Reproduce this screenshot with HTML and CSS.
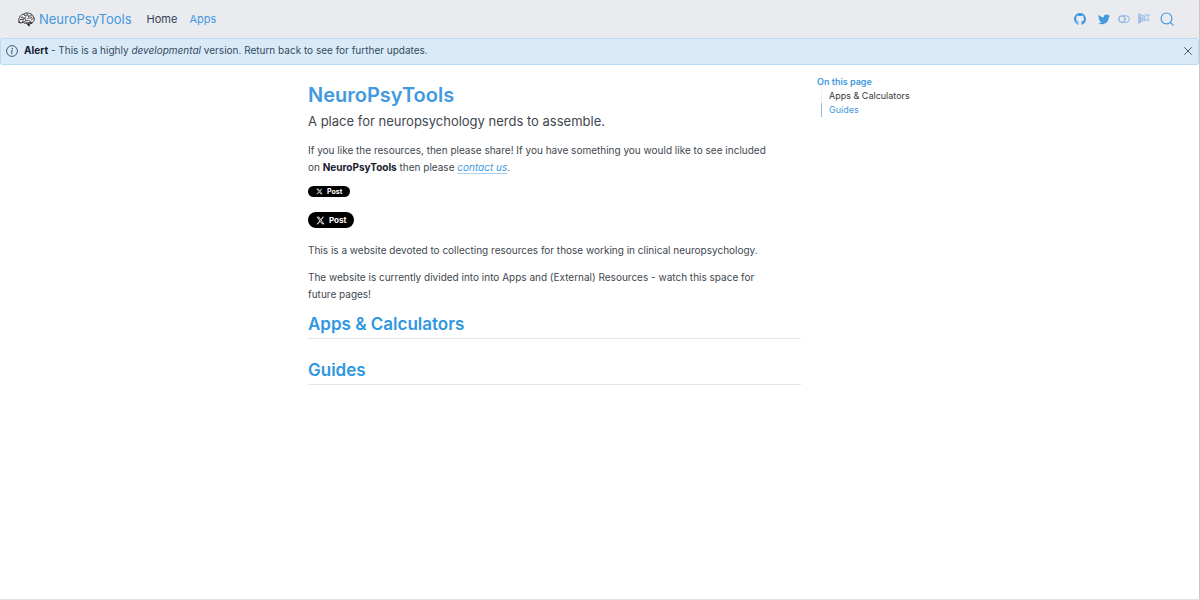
FILE: index.html
```html
<!DOCTYPE html>
<html lang="en">
<head>
<meta charset="utf-8">
<meta name="viewport" content="width=device-width, initial-scale=1">
<title>NeuroPsyTools</title>
<link rel="stylesheet" href="styles.css">
</head>
<body>
<header class="navbar">
  <a class="brand" href="#">
    <svg class="brand-logo" viewBox="0 0 32 28" fill="none" stroke="#25282c" stroke-width="1.7" stroke-linecap="round" stroke-linejoin="round" aria-hidden="true">
      <path fill="#f4f4f4" d="M4 19C0 17 1 12 3 10 4 6 8 4 11 4c3-3 8-3 11-1 4 0 6 3 7 6 3 3 2 8-1 9-1 3-3 4-6 4l-2 4-4-5c-3 1-5 0-6-2-3 2-7 2-9 0z"/>
      <path d="M6 10c3-2 5 0 4 2M4 14c3-1 5 1 8-1M11 4c-1 3 3 3 5 2M15 9c-3 0-3 4-1 5M17 3c2 2 0 4 3 5M20 8c3 0 4-2 6-1M18 12c2-2 5 0 8-1M29 12c-2 0-2 3-4 3M13 19c-1-4 3-4 5-3M20 16c1 2 4 1 5 3M16 20c2 1 4-1 5 1M8 17c1 0 3-1 4 1"/>
      <path stroke-width="2.4" d="M19 21l2 5M22 20l4 1"/>
    </svg>
    <span>NeuroPsyTools</span>
  </a>
  <nav class="nav-links" aria-label="Main">
    <a class="nav-link nav-link-current" href="#">Home</a>
    <a class="nav-link" href="#">Apps</a>
  </nav>
  <div class="nav-tools">
    <a class="tool tool-github" href="#" aria-label="GitHub">
      <svg class="icon" viewBox="0 0 16 16" fill="currentColor"><path d="M8 0C3.58 0 0 3.58 0 8c0 3.54 2.29 6.53 5.47 7.59.4.07.55-.17.55-.38 0-.19-.01-.82-.01-1.49-2.01.37-2.53-.49-2.69-.94-.09-.23-.48-.94-.82-1.13-.28-.15-.68-.52-.01-.53.63-.01 1.08.58 1.23.82.72 1.21 1.87.87 2.33.66.07-.52.28-.87.51-1.07-1.78-.2-3.64-.89-3.64-3.95 0-.87.31-1.59.82-2.15-.08-.2-.36-1.02.08-2.12 0 0 .67-.21 2.2.82.64-.18 1.32-.27 2-.27s1.36.09 2 .27c1.53-1.04 2.2-.82 2.2-.82.44 1.1.16 1.92.08 2.12.51.56.82 1.27.82 2.15 0 3.07-1.87 3.75-3.65 3.95.29.25.54.73.54 1.48 0 1.07-.01 1.93-.01 2.2 0 .21.15.46.55.38A8.01 8.01 0 0 0 16 8c0-4.42-3.58-8-8-8z"/></svg>
    </a>
    <a class="tool" href="#" aria-label="Twitter">
      <svg class="icon" viewBox="0 0 16 16" fill="currentColor"><path d="M5.03 15c6.04 0 9.34-5 9.34-9.33 0-.14 0-.28-.01-.42A6.7 6.7 0 0 0 16 3.54a6.5 6.5 0 0 1-1.89.52 3.3 3.3 0 0 0 1.45-1.82 6.5 6.5 0 0 1-2.09.79A3.29 3.29 0 0 0 7.88 6.03 9.3 9.3 0 0 1 1.11 2.6a3.29 3.29 0 0 0 1.02 4.38A3.3 3.3 0 0 1 .64 6.58v.04a3.29 3.29 0 0 0 2.63 3.22 3.2 3.2 0 0 1-.86.11 3 3 0 0 1-.62-.06 3.29 3.29 0 0 0 3.07 2.28A6.6 6.6 0 0 1 .78 13.6a6 6 0 0 1-.78-.05A9.3 9.3 0 0 0 5.03 15"/></svg>
    </a>
    <button class="tool tool-soft" type="button" aria-label="Toggle dark mode">
      <svg class="icon" viewBox="0 0 12 12" fill="none" stroke="currentColor" stroke-width="1"><rect x=".6" y="2.8" width="10.8" height="6.6" rx="3.3"/><circle cx="4" cy="6.100" r="3.200"/><path d="M5.600 3.400c1.800 1.300 1.800 4.100 0 5.400"/></svg>
    </button>
    <button class="tool tool-soft tool-reader" type="button" aria-label="Toggle reader mode">
      <svg class="icon" viewBox="0 0 12 12" fill="none" stroke="currentColor" stroke-width=".9"><path fill="currentColor" fill-opacity=".3" d="M1 1l6 2.500v3L1 10z"/><path d="M1 .5v11M6.500 2h5L9.500 4.500l1.800 2.700H6.500M2.500 3.500v5M4.500 4v3.500"/></svg>
    </button>
    <button class="tool" type="button" aria-label="Search">
      <svg class="icon-search" viewBox="0 0 16 16" fill="none" stroke="currentColor" stroke-width="1.3" stroke-linecap="round"><circle cx="7.400" cy="7.400" r="6.200"/><path d="M12 12l3 3"/></svg>
    </button>
  </div>
</header>

<div class="alert" role="alert">
  <svg class="alert-icon" viewBox="0 0 12 12" fill="none" stroke="currentColor" aria-hidden="true"><circle cx="6" cy="6" r="5.400" stroke-width=".9"/><path d="M5.200 5.100h1L5.500 8.400c0 .5.400.5.900.2" stroke-width=".9"/><circle cx="6.400" cy="3.400" r=".6" fill="currentColor" stroke="none"/></svg>
  <p class="alert-text"><strong>Alert</strong> - This is a highly <em>developmental</em> version. Return back to see for further updates.</p>
  <button class="alert-close" type="button" aria-label="Close alert">
    <svg class="close-icon" viewBox="0 0 8 8" fill="none" stroke="currentColor" stroke-width=".9" stroke-linecap="round"><path d="M.6.6l6.800 6.800M7.400.6L.6 7.400"/></svg>
  </button>
</div>

<div class="page">
  <main class="content">
    <h1 class="title">NeuroPsyTools</h1>
    <p class="subtitle">A place for neuropsychology nerds to assemble.</p>
    <p class="text">If you like the resources, then please share! If you have something you would like to see included on <strong>NeuroPsyTools</strong> then please <a class="link" href="#">contact us</a>.</p>
    <div class="share">
      <a class="post post-small" href="#">
        <svg class="x-logo" viewBox="0 0 24 24" fill="currentColor" aria-hidden="true"><path d="M18.240 2.250h3.310l-7.230 8.260 8.500 11.240h-6.660l-5.210-6.820-5.970 6.820H1.680l7.730-8.840L1.250 2.250h6.830l4.710 6.230zm-1.160 17.520h1.830L7.080 4.130H5.120z"/></svg>
        <span>Post</span>
      </a>
      <a class="post" href="#">
        <svg class="x-logo" viewBox="0 0 24 24" fill="currentColor" aria-hidden="true"><path d="M18.240 2.250h3.310l-7.230 8.260 8.500 11.240h-6.660l-5.210-6.820-5.970 6.820H1.680l7.730-8.840L1.250 2.250h6.830l4.710 6.230zm-1.160 17.520h1.830L7.080 4.130H5.120z"/></svg>
        <span>Post</span>
      </a>
    </div>
    <p class="text">This is a website devoted to collecting resources for those working in clinical neuropsychology.</p>
    <p class="text">The website is currently divided into into Apps and (External) Resources - watch this space for future pages!</p>
    <section class="section" id="apps"><h2 class="section-title">Apps &amp; Calculators</h2></section>
    <section class="section" id="guides"><h2 class="section-title">Guides</h2></section>
  </main>
  <nav class="toc" aria-labelledby="toc-title">
    <h2 class="toc-title" id="toc-title">On this page</h2>
    <ul class="toc-list">
      <li><a class="toc-link" href="#apps">Apps &amp; Calculators</a></li>
      <li><a class="toc-link toc-link-active" href="#guides">Guides</a></li>
    </ul>
  </nav>
</div>
</body>
</html>
```

FILE: styles.css
```css
* { box-sizing: border-box; }

body {
  margin: 0;
  min-height: 100vh;
  border-right: 1px solid #c9c9c9;
  border-bottom: 1px solid #e2e2e2;
  background: #fff;
  color: #40474f;
  font-family: Inter, sans-serif;
  font-size: 10px;
  line-height: 17px;
}

h1, h2, p, ul { margin: 0; padding: 0; }
a { color: #4199de; text-decoration: none; }
strong { color: #17202b; font-weight: 700; }
button { border: 0; padding: 0; background: none; font: inherit; cursor: pointer; }
svg { display: block; }

.navbar {
  display: flex;
  align-items: center;
  min-height: 38px;
  padding: 0 25px 0 18px;
  background: #eaebef;
}
.brand { display: flex; align-items: center; gap: 4px; font-size: 13px; }
.brand-logo { width: 17px; height: 15px; }
.nav-links { display: flex; gap: 12px; margin-left: 15px; font-size: 11px; }
.nav-link-current { color: #2e4057; }
.nav-tools { display: flex; align-items: center; gap: 8px; margin-left: auto; }
.tool { display: block; color: #4199de; }
.tool-github { margin-right: 4px; }
.tool-soft { color: #8ab7e5; }
.tool-reader { margin-right: 2px; }
.icon { width: 12px; height: 12px; }
.icon-search { width: 14px; height: 14px; }

.alert {
  display: flex;
  align-items: center;
  min-height: 27px;
  padding: 0 6px 2px 5px;
  border: 1px solid #b9dcf4;
  border-radius: 2px;
  background: #d9ebf9;
  color: #34495e;
}
.alert-icon { width: 12px; height: 12px; margin-right: 6px; }
.alert-text { flex: 1; }
.close-icon { width: 8px; height: 8px; color: #34495e; }

.page {
  display: grid;
  grid-template-columns: minmax(0, 493fr) minmax(0, 382fr);
  column-gap: 16px;
  padding-left: 308px;
}
.content { padding-top: 16px; }
.title { color: #4199de; font-size: 20px; font-weight: 600; line-height: 28px; }
.subtitle { margin-bottom: 9px; font-size: 13px; line-height: 24px; }
.text { margin-bottom: 10px; padding-right: 24px; }
.link { border-bottom: 1px solid #a8cff0; font-style: italic; }

.share { display: flex; flex-direction: column; align-items: flex-start; gap: 15px; margin-bottom: 14px; }
.post {
  display: flex;
  align-items: center;
  gap: 4px;
  height: 16px;
  padding: 0 8px;
  border-radius: 8px;
  background: #000;
  color: #fff;
  font-size: 8px;
  font-weight: 700;
}
.post-small { height: 11px; font-size: 7px; }
.x-logo { width: 9px; height: 9px; }
.post-small .x-logo { width: 7px; height: 7px; }

.section { margin-bottom: 20px; }
.section-title {
  padding-bottom: 3px;
  border-bottom: 1px solid #e3e5e7;
  color: #2f97e0;
  font-size: 17px;
  font-weight: 600;
  line-height: 22px;
}

.toc { padding-top: 10px; font-size: 9px; line-height: 14px; }
.toc-title { color: #4199de; font-size: 9px; font-weight: 600; line-height: 14px; }
.toc-list { margin-left: 4px; list-style: none; }
.toc-link { display: block; padding-left: 7px; border-left: 1px solid #edeff1; color: #343a40; }
.toc-link-active { border-color: #8fbde8; color: #4199de; }

@media (max-width: 900px) {
  .page { padding-left: 24px; }
}
```
